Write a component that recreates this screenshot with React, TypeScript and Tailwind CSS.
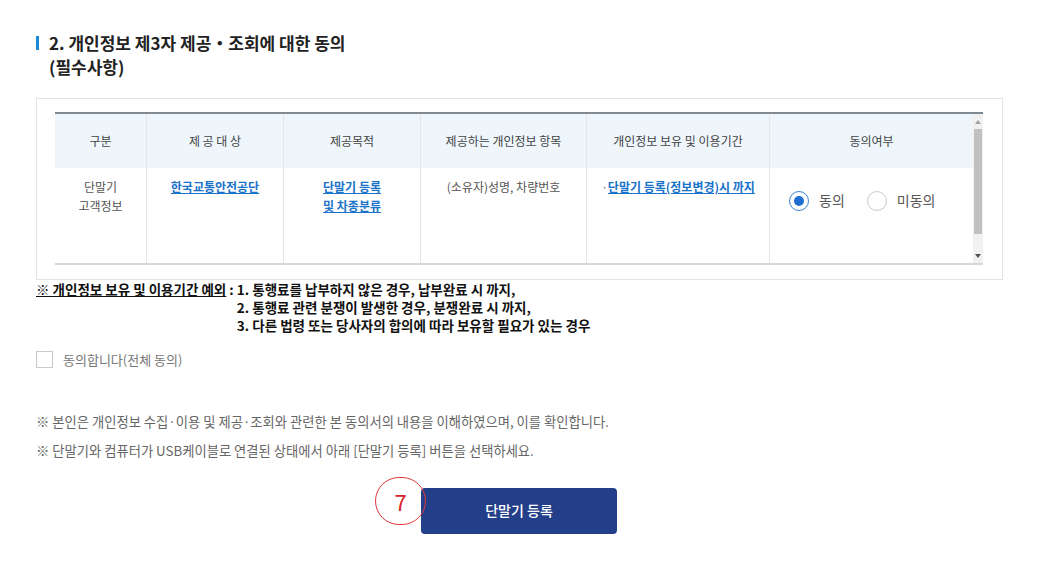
import React from 'react';

const font = { fontFamily: '"Noto Sans CJK KR", "Noto Sans", sans-serif' };

const headers = ['구분', '제 공 대 상', '제공목적', '제공하는 개인정보 항목', '개인정보 보유 및 이용기간', '동의여부'];
const colW = ['w-[92px]', 'w-[137px]', 'w-[137px]', 'w-[166px]', 'w-[183px]', 'w-[203px]'];

function Radio({ checked, label }: { checked: boolean; label: string }) {
  return (
    <label className="flex items-center gap-[10px]">
      <span
        className={
          checked
            ? 'flex h-[20px] w-[20px] items-center justify-center rounded-full border border-[#3b82d6] bg-white'
            : 'flex h-[20px] w-[20px] items-center justify-center rounded-full border border-[#c8c8c8] bg-white'
        }
      >
        {checked && <span className="h-[10px] w-[10px] rounded-full bg-[#1c6fd1]" />}
      </span>
      <span className="text-[14px] text-[#555]">{label}</span>
    </label>
  );
}

function Scrollbar() {
  return (
    <div className="flex w-[14px] flex-col bg-[#f1f1f1]">
      <div className="flex h-[15px] items-center justify-center">
        <span className="h-0 w-0 border-x-[3px] border-b-[4px] border-x-transparent border-b-[#a3a3a3]" />
      </div>
      <div className="mx-[1px] h-[105px] bg-[#c1c1c1]" />
      <div className="flex-1" />
      <div className="flex h-[15px] items-center justify-center">
        <span className="h-0 w-0 border-x-[3px] border-t-[4px] border-x-transparent border-t-[#505050]" />
      </div>
    </div>
  );
}

export default function App() {
  return (
    <div className="min-h-[578px] w-[1039px] bg-white" style={font}>
      <div className="px-[36px] pt-[31px]">
        <div className="flex">
          <span className="mt-[5px] mr-[10px] h-[14px] w-[3px] shrink-0 bg-[#1a8ad8]" />
          <h2 className="text-[17px] font-bold leading-[24px] text-[#222]">
            2. 개인정보 제3자 제공・조회에 대한 동의
            <br />
            (필수사항)
          </h2>
        </div>

        <div className="mt-[19px] border border-[#e3e3e3] pt-[13px] pr-[19px] pb-[14px] pl-[18px]">
          <div className="flex border-t-2 border-b-2 border-t-[#7f8a93] border-b-[#d6d9dc]">
            <div className="flex flex-col">
              <div className="flex h-[54px] bg-[#eef6fc]">
                {headers.map((h, i) => (
                  <div
                    key={h}
                    className={`${colW[i]} flex items-center justify-center text-[12px] text-[#444] ${
                      i < 5 ? 'border-r border-[#e3e7ea]' : ''
                    }`}
                  >
                    {h}
                  </div>
                ))}
              </div>
              <div className="flex h-[95px] text-[12px]">
                <div className="flex w-[92px] flex-col items-center border-r border-[#e3e7ea] pt-[9px] leading-[19px] text-[#555]">
                  <span>단말기</span>
                  <span>고객정보</span>
                </div>
                <div className="flex w-[137px] justify-center border-r border-[#e3e7ea] pt-[9px] leading-[19px]">
                  <a className="font-bold text-[#1a73c8] underline">한국교통안전공단</a>
                </div>
                <div className="flex w-[137px] flex-col items-center border-r border-[#e3e7ea] pt-[9px] leading-[19px] font-bold text-[#1a73c8]">
                  <a className="underline">단말기 등록</a>
                  <a className="underline">및 차종분류</a>
                </div>
                <div className="flex w-[166px] justify-center border-r border-[#e3e7ea] pt-[9px] leading-[19px] text-[#555]">
                  (소유자)성명, 차량번호
                </div>
                <div className="flex w-[183px] justify-center border-r border-[#e3e7ea] pt-[9px] leading-[19px]">
                  <span className="text-[#777]">·</span>
                  <a className="font-bold text-[#1a73c8] underline">단말기 등록(정보변경)시 까지</a>
                </div>
                <div className="flex w-[203px] items-start gap-[22px] pt-[22px] pl-[19px]">
                  <Radio checked label="동의" />
                  <Radio checked={false} label="미동의" />
                </div>
              </div>
            </div>
            <Scrollbar />
          </div>
        </div>

        <div className="flex text-[13.5px] font-bold leading-[18px] text-[#111]">
          <span className="whitespace-pre">
            <span className="underline">※ 개인정보 보유 및 이용기간 예외</span>
            {' : '}
          </span>
          <div className="flex flex-col">
            <span>1. 통행료를 납부하지 않은 경우, 납부완료 시 까지,</span>
            <span>2. 통행료 관련 분쟁이 발생한 경우, 분쟁완료 시 까지,</span>
            <span>3. 다른 법령 또는 당사자의 합의에 따라 보유할 필요가 있는 경우</span>
          </div>
        </div>

        <label className="mt-[16px] flex items-center gap-[10px]">
          <span className="h-[17px] w-[17px] border border-[#c9c9c9] bg-white" />
          <span className="text-[13px] text-[#777]">동의합니다(전체 동의)</span>
        </label>

        <div className="mt-[42px] flex flex-col gap-[10px] text-[13.3px] leading-[19px] text-[#666]">
          <p>※ 본인은 개인정보 수집·이용 및 제공·조회와 관련한 본 동의서의 내용을 이해하였으며, 이를 확인합니다.</p>
          <p>※ 단말기와 컴퓨터가 USB케이블로 연결된 상태에서 아래 [단말기 등록] 버튼을 선택하세요.</p>
        </div>

        <div className="mt-[28px] flex justify-center pr-[1px]">
          <div className="relative">
            <button
              type="button"
              className="h-[46px] w-[196px] rounded-[4px] bg-[#243f8a] text-[14px] font-medium text-white"
            >
              단말기 등록
            </button>
            <span className="absolute top-[-11px] left-[-46px] flex h-[48px] w-[51px] items-center justify-center rounded-full border border-[#e0393e] text-[22px] leading-none text-[#d9232a]">
              7
            </span>
          </div>
        </div>
      </div>
    </div>
  );
}
